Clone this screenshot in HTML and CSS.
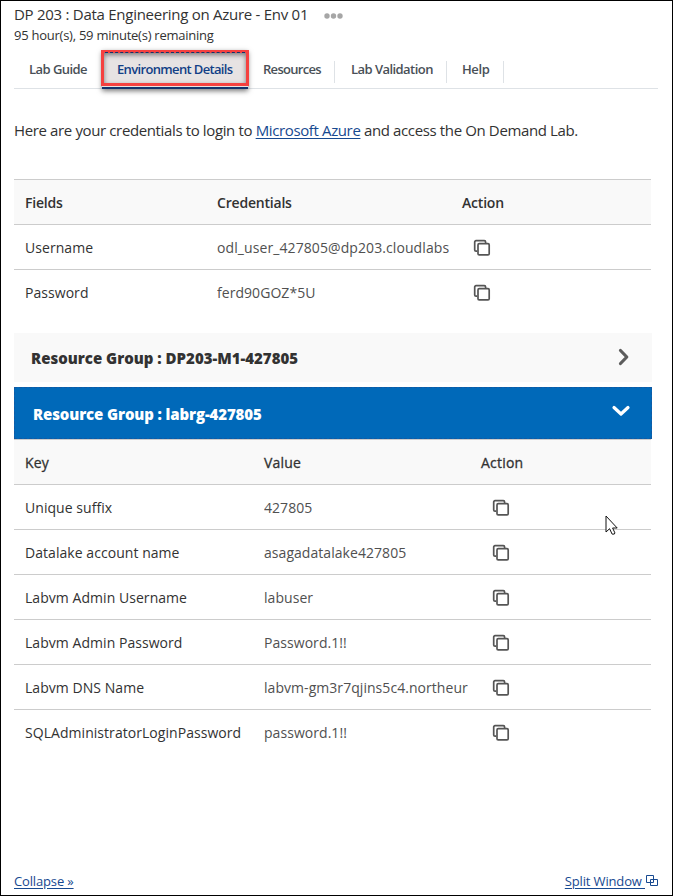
FILE: index.html
```
<!DOCTYPE html>
<html lang="en">
<head>
<meta charset="utf-8">
<title>DP 203 : Data Engineering on Azure</title>
<link rel="stylesheet" href="styles.css">
</head>
<body>
<svg class="defs" width="0" height="0">
  <symbol id="copy" viewBox="0 0 18 18"><path d="M4.200 12.200H3a1.300 1.300 0 0 1-1.300-1.300V2.900A1.300 1.300 0 0 1 3 1.600h8.300a1.300 1.300 0 0 1 1.300 1.300v1.200"/><rect x="5" y="4.700" width="11.200" height="11.200" rx="1.200"/></symbol>
</svg>
<main class="panel">
  <header>
    <div class="title"><span class="t-title">DP 203 : Data Engineering on Azure - Env 01</span><svg class="dots" width="20" height="6"><circle cx="3" cy="3" r="2.700"/><circle cx="9.500" cy="3" r="2.700"/><circle cx="16" cy="3" r="2.700"/></svg></div>
    <div class="remaining">95 hour(s), 59 minute(s) remaining</div>
  </header>
  <nav class="tabs">
    <a class="tab guide">Lab Guide</a>
    <a class="tab active">Environment Details</a>
    <a class="tab res">Resources</a>
    <a class="tab val">Lab Validation</a>
    <a class="tab help">Help</a>
  </nav>
  <p class="intro">Here are your credentials to login to <a>Microsoft Azure</a> and access the On Demand Lab.</p>
  <section class="table creds">
    <div class="row head"><b>Fields</b><b>Credentials</b><b>Action</b></div>
    <div class="row"><span>Username</span><span class="value user">odl_user_427805@dp203.cloudlabs</span><svg class="copy"><use href="#copy"/></svg></div>
    <div class="row"><span>Password</span><span class="value pw">ferd90GOZ*5U</span><svg class="copy"><use href="#copy"/></svg></div>
  </section>
  <div class="group"><span>Resource Group : DP203-M1-427805</span><svg width="14" height="18"><path d="M3.500 2.500 9.800 9 3.500 15.500"/></svg></div>
  <div class="group open"><span>Resource Group : labrg-427805</span><svg width="20" height="14"><path d="M3 3.500 10 10 17 3.500"/></svg></div>
  <section class="table keys">
    <div class="row head"><b>Key</b><b>Value</b><b>Action</b></div>
    <div class="row"><span>Unique suffix</span><span class="value">427805</span><svg class="copy"><use href="#copy"/></svg></div>
    <div class="row"><span>Datalake account name</span><span class="value">asagadatalake427805</span><svg class="copy"><use href="#copy"/></svg></div>
    <div class="row"><span>Labvm Admin Username</span><span class="value">labuser</span><svg class="copy"><use href="#copy"/></svg></div>
    <div class="row"><span>Labvm Admin Password</span><span class="value">Password.1!!</span><svg class="copy"><use href="#copy"/></svg></div>
    <div class="row"><span>Labvm DNS Name</span><span class="value dns">labvm-gm3r7qjins5c4.northeur</span><svg class="copy"><use href="#copy"/></svg></div>
    <div class="row"><span>SQLAdministratorLoginPassword</span><span class="value">password.1!!</span><svg class="copy"><use href="#copy"/></svg></div>
  </section>
  <footer><a>Collapse »</a><a class="split">Split Window <svg width="13" height="13"><path d="M1.500 1.500h7v7h-7zM5.500 5.500h7v6h-7z"/></svg></a></footer>
  <svg class="cursor" width="14" height="21" viewBox="0 0 14 21"><path d="M1 1v16l3.600-3.300 2.500 5.400h2.200l.6-1.200-2.300-4.900H12.200z"/></svg>
</main>
</body>
</html>
```
FILE: styles.css
```
* { box-sizing: border-box; }
body { margin: 0; background: #fff; color: #323232; font-family: "Open Sans", "Noto Sans", sans-serif; font-size: 14px; }
.defs { position: absolute; }
.panel { position: relative; display: flex; flex-direction: column; width: 673px; height: 896px; border: 1px solid #000; padding: 4px 14px 0 13px; }
header { height: 45px; }
.title { display: flex; align-items: center; gap: 16px; height: 20px; margin-top: -1px; font-size: 15px; white-space: nowrap; }
.t-title { letter-spacing: -0.27px; }
.dots { fill: #a6a6a6; margin-top: 4px; }
.remaining { height: 20px; margin-top: 1px; line-height: 20px; font-size: 13px; letter-spacing: -0.25px; }
.tabs { display: flex; height: 39px; border-bottom: 1px solid #dee2e6; color: #495057; font-size: 13px; font-weight: 600; line-height: 39px; letter-spacing: -0.55px; }
.tab { position: relative; white-space: nowrap; padding-left: 15px; height: 39px; }
.guide { width: 88px; }
.tab.active { width: 146px; padding-left: 15px; letter-spacing: -0.65px; color: #123f86; background: #e7e3e3; border-bottom: 2px solid #12336b; box-shadow: 0 2px 5px #0008; }
.active::before { content: ""; position: absolute; inset: 0 -1px 1px; border: 3px solid #f5413f; box-shadow: inset 0 2px 5px #0007; }
.active::after { content: ""; position: absolute; left: 3px; right: 3px; top: 2px; border-top: 1px dashed #12336b; }
.res { width: 87px; }
.val { width: 112px; padding-left: 16px; }
.help { width: 57px; }
.tab.res { letter-spacing: -0.7px; }
.tab.help { letter-spacing: -0.4px; }
.res::after, .val::after, .help::after { content: ""; position: absolute; right: 0; top: 11px; height: 22px; border-right: 1px solid #dee2e6; }
.intro { margin: 30px 0 0; height: 60px; line-height: 22px; font-size: 15px; letter-spacing: -0.37px; white-space: nowrap; }
a { color: inherit; }
.intro a, footer a { color: #174990; text-decoration: underline; text-underline-offset: 2px; }
.table { width: 637px; }
.creds { height: 154px; }
.row { display: grid; align-items: center; height: 45px; padding-left: 11px; border-top: 1px solid #ccc; }
.creds .row { grid-template-columns: 192px 245px 1fr; }
.keys .row { grid-template-columns: 239px 217px 1fr; }
.row > span, .row b { white-space: nowrap; line-height: 22px; padding-top: 2px; }
.row > span { letter-spacing: 0.05px; }
.row b { font-weight: 600; letter-spacing: -0.2px; }
.keys .row b { font-weight: 500; letter-spacing: 0.2px; -webkit-text-stroke: 0.3px currentColor; }
.value { color: #505050; overflow: hidden; }
.row > .user { width: 233px; letter-spacing: 0.09px; }
.dns { width: 204px; }
.head { background: #f9f9f9; }
.copy { width: 18px; height: 18px; margin: 1px 0 0 11px; fill: none; stroke: #555; stroke-width: 1.7; }
.group { display: flex; align-items: center; justify-content: space-between; width: 638px; height: 49px; padding: 1px 21px 0 17px; background: #f9f9f9; font-size: 15px; font-weight: 800; letter-spacing: 0; }
.group svg { fill: none; stroke: #5c5c5c; stroke-width: 3.2; stroke-linecap: round; stroke-linejoin: round; margin-top: -3px; }
.open { height: 52px; margin-top: 5px; padding: 1px 20px 0 18px; color: #fff; background: #0069b9; border: 1px dashed #1259a2; letter-spacing: -0.12px; }
.open svg { stroke: #fff; margin-top: -6px; }
footer { display: flex; justify-content: space-between; margin-top: 117px; font-size: 13px; line-height: 20px; letter-spacing: -0.15px; }
.split svg { fill: none; stroke: #174990; vertical-align: -1px; }
.cursor { position: absolute; left: 604px; top: 514px; fill: #fff; stroke: #111; stroke-width: 1; }
```
